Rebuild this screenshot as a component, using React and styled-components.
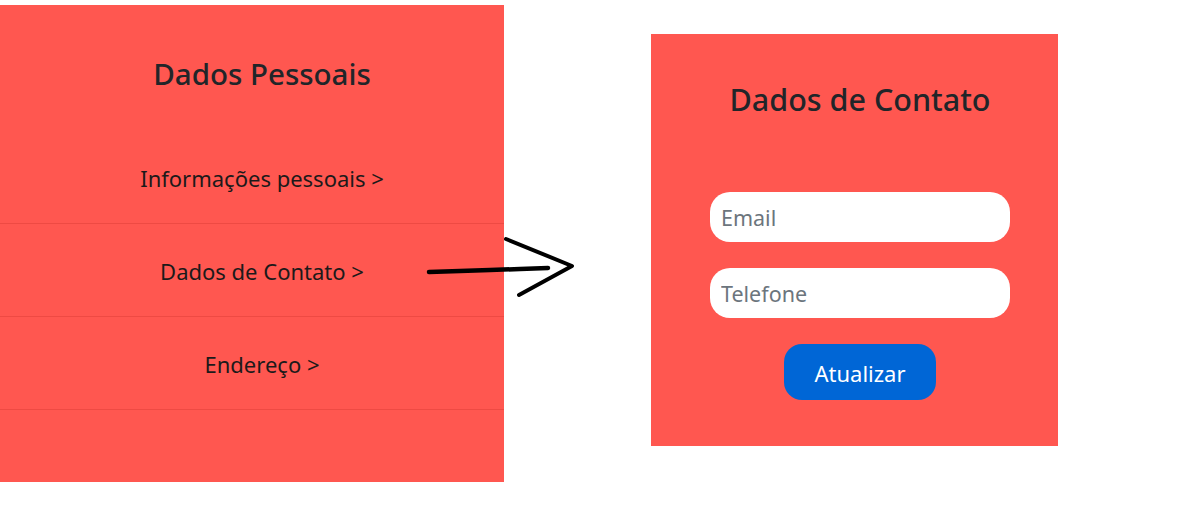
import React from "react";
import styled, { createGlobalStyle } from "styled-components";

const Global = createGlobalStyle`
  html, body { margin: 0; padding: 0; background: #ffffff; }
  body { font-family: "Noto Sans", "Open Sans", sans-serif; color: #212529; }
  * { box-sizing: border-box; }
`;

const Page = styled.div`
  position: relative;
  display: flex;
  align-items: flex-start;
  width: 1185px;
  height: 511px;
  overflow: hidden;
`;

const Menu = styled.nav`
  width: 504px;
  height: 477px;
  margin-top: 5px;
  padding-left: 20px;
  background: #ff5750;
  display: flex;
  flex-direction: column;
`;

const Title = styled.h2`
  margin: 0;
  font-size: ${(p) => p.$size || "29.5px"};
  font-weight: 500;
  line-height: 34px;
  text-align: center;
  color: #212529;
`;

const MenuHeader = styled.div`
  padding-top: 52px;
  height: 126px;
`;

const MenuItem = styled.a`
  display: flex;
  align-items: center;
  justify-content: center;
  height: 93px;
  margin-left: -20px;
  padding-left: 20px;
  border-bottom: 1px solid #ee4a43;
  font-size: 22px;
  color: #1c1a1a;
  text-decoration: none;
  padding-top: ${(p) => (p.$first ? "1px" : "2px")};
`;

const Card = styled.section`
  width: 407px;
  margin-left: 147px;
  margin-top: 34px;
  height: 412px;
  background: #ff5750;
  padding-top: 48px;
  padding-left: 11px;
  display: flex;
  flex-direction: column;
  align-items: center;
`;

const Form = styled.form`
  margin-top: 76px;
  display: flex;
  flex-direction: column;
  align-items: center;
  gap: 26px;
`;

const Input = styled.input`
  width: 300px;
  height: 50px;
  border: none;
  border-radius: 20px;
  background: #ffffff;
  padding: 0 11px;
  font-family: inherit;
  font-size: 21.5px;
  color: #212529;
  outline: none;
  &::placeholder { color: #6c757d; }
`;

const Button = styled.button`
  width: 152px;
  height: 56px;
  border: none;
  border-radius: 18px;
  background: #0066d6;
  color: #ffffff;
  font-family: inherit;
  font-size: 22px;
  padding: 2px 0 0;
  cursor: pointer;
`;

const Arrow = styled.svg`
  position: absolute;
  left: 0;
  top: 0;
  pointer-events: none;
`;

export default function App() {
  return (
    <>
      <Global />
      <Page>
        <Menu>
          <MenuHeader>
            <Title>Dados Pessoais</Title>
          </MenuHeader>
          <MenuItem $first>Informações pessoais &gt;</MenuItem>
          <MenuItem>Dados de Contato &gt;</MenuItem>
          <MenuItem>Endereço &gt;</MenuItem>
        </Menu>
        <Card>
          <Title $size="30.5px">Dados de Contato</Title>
          <Form onSubmit={(e) => e.preventDefault()}>
            <Input placeholder="Email" />
            <Input placeholder="Telefone" />
            <Button type="submit">Atualizar</Button>
          </Form>
        </Card>
        <Arrow width="1185" height="511" viewBox="0 0 1185 511">
          <path
            d="M429 272 L460 271 L490 270 L520 269 L548 268"
            fill="none"
            stroke="#000"
            strokeWidth="4.5"
            strokeLinecap="round"
          />
          <path
            d="M506 239 L572 266 L519 295"
            fill="none"
            stroke="#000"
            strokeWidth="4"
            strokeLinecap="round"
            strokeLinejoin="round"
          />
        </Arrow>
      </Page>
    </>
  );
}
